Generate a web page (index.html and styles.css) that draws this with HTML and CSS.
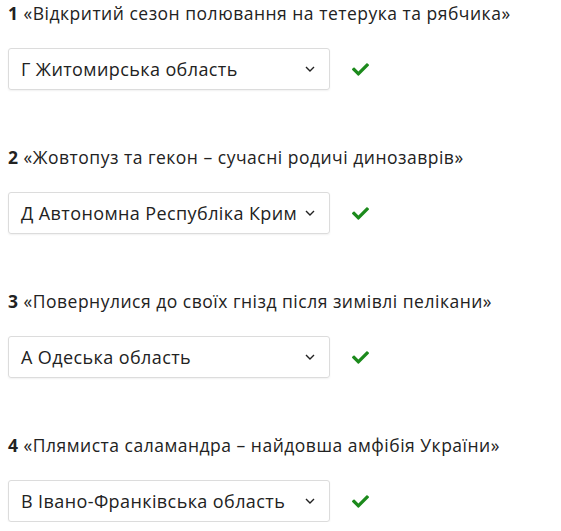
FILE: index.html
```html
<!DOCTYPE html>
<html lang="uk">
<head>
<meta charset="utf-8">
<link rel="stylesheet" href="styles.css">
</head>
<body>
<div class="quiz">
  <div class="question">
    <p class="q-title"><b>1</b> «Відкритий сезон полювання на тетерука та рябчика»</p>
    <div class="answer">
      <div class="select"><span>Г Житомирська область</span><svg class="chev" viewBox="0 0 10 6" width="10" height="6"><path d="M1 1l4 4 4-4" fill="none" stroke="#222" stroke-width="1.4"/></svg></div>
      <svg class="check" viewBox="0 0 512 512" width="17" height="17"><path d="M173.898 439.404l-166.4-166.4c-9.997-9.997-9.997-26.206 0-36.204l36.203-36.204c9.997-9.998 26.207-9.998 36.204 0L192 312.69 432.095 72.596c9.997-9.997 26.207-9.997 36.204 0l36.203 36.204c9.997 9.997 9.997 26.206 0 36.204l-294.4 294.401c-9.998 9.997-26.207 9.997-36.204-.001z"/></svg>
    </div>
  </div>
  <div class="question">
    <p class="q-title"><b>2</b> «Жовтопуз та гекон – сучасні родичі динозаврів»</p>
    <div class="answer">
      <div class="select"><span>Д Автономна Республіка Крим</span><svg class="chev" viewBox="0 0 10 6" width="10" height="6"><path d="M1 1l4 4 4-4" fill="none" stroke="#222" stroke-width="1.4"/></svg></div>
      <svg class="check" viewBox="0 0 512 512" width="17" height="17"><path d="M173.898 439.404l-166.4-166.4c-9.997-9.997-9.997-26.206 0-36.204l36.203-36.204c9.997-9.998 26.207-9.998 36.204 0L192 312.69 432.095 72.596c9.997-9.997 26.207-9.997 36.204 0l36.203 36.204c9.997 9.997 9.997 26.206 0 36.204l-294.4 294.401c-9.998 9.997-26.207 9.997-36.204-.001z"/></svg>
    </div>
  </div>
  <div class="question">
    <p class="q-title"><b>3</b> «Повернулися до своїх гнізд після зимівлі пелікани»</p>
    <div class="answer">
      <div class="select"><span>А Одеська область</span><svg class="chev" viewBox="0 0 10 6" width="10" height="6"><path d="M1 1l4 4 4-4" fill="none" stroke="#222" stroke-width="1.4"/></svg></div>
      <svg class="check" viewBox="0 0 512 512" width="17" height="17"><path d="M173.898 439.404l-166.4-166.4c-9.997-9.997-9.997-26.206 0-36.204l36.203-36.204c9.997-9.998 26.207-9.998 36.204 0L192 312.69 432.095 72.596c9.997-9.997 26.207-9.997 36.204 0l36.203 36.204c9.997 9.997 9.997 26.206 0 36.204l-294.4 294.401c-9.998 9.997-26.207 9.997-36.204-.001z"/></svg>
    </div>
  </div>
  <div class="question">
    <p class="q-title"><b>4</b> «Плямиста саламандра – найдовша амфібія України»</p>
    <div class="answer">
      <div class="select"><span>В Івано-Франківська область</span><svg class="chev" viewBox="0 0 10 6" width="10" height="6"><path d="M1 1l4 4 4-4" fill="none" stroke="#222" stroke-width="1.4"/></svg></div>
      <svg class="check" viewBox="0 0 512 512" width="17" height="17"><path d="M173.898 439.404l-166.4-166.4c-9.997-9.997-9.997-26.206 0-36.204l36.203-36.204c9.997-9.998 26.207-9.998 36.204 0L192 312.69 432.095 72.596c9.997-9.997 26.207-9.997 36.204 0l36.203 36.204c9.997 9.997 9.997 26.206 0 36.204l-294.4 294.401c-9.998 9.997-26.207 9.997-36.204-.001z"/></svg>
    </div>
  </div>
</div>
</body>
</html>
```
FILE: styles.css
```css
html, body {
  margin: 0;
  padding: 0;
  background: #fff;
}
body {
  font-family: "Open Sans", "Liberation Sans", sans-serif;
  color: #222;
}
.quiz {
  padding: 0 8px;
}
.question {
  margin-bottom: 54px;
}
.question:last-child {
  margin-bottom: 0;
}
.q-title {
  margin: 0;
  font-size: 17.5px;
  letter-spacing: 0.5px;
  line-height: 26px;
  color: #222;
}
.q-title b {
  font-weight: 700;
}
.answer {
  margin-top: 22px;
  display: flex;
  align-items: center;
  gap: 22px;
}
.select {
  box-sizing: border-box;
  width: 322px;
  height: 42px;
  border: 1px solid #dcdcdc;
  border-radius: 3px;
  box-shadow: 0 1px 2px rgba(0,0,0,0.06);
  display: flex;
  align-items: center;
  justify-content: space-between;
  padding: 0 14px 0 12px;
  font-size: 18px;
  letter-spacing: 0.4px;
  color: #222;
}
.chev {
  flex: none;
}
.check {
  fill: #1c8a1c;
  flex: none;
}
```
